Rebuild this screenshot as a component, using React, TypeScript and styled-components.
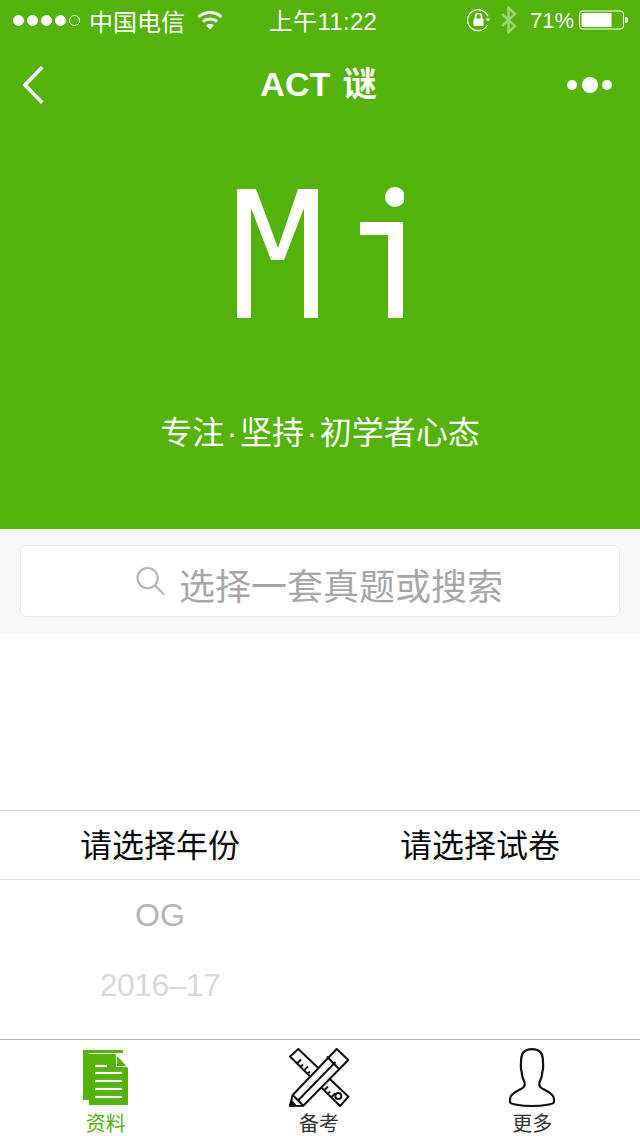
import React from "react";
import styled, { createGlobalStyle } from "styled-components";

const Global = createGlobalStyle`
  html, body { margin: 0; padding: 0; background: #fff; }
  * { box-sizing: border-box; }
`;

const FONT = `"Liberation Sans", "Noto Sans CJK SC", sans-serif`;
const GREEN = "#53b30a";

const Page = styled.div`
  width: 640px;
  height: 1136px;
  display: flex;
  flex-direction: column;
  overflow: hidden;
  font-family: ${FONT};
  background: #fff;
`;

const Hero = styled.header`
  height: 529px;
  flex: none;
  background: ${GREEN};
  color: #fff;
  display: flex;
  flex-direction: column;
`;

const StatusBar = styled.div`
  height: 40px;
  display: grid;
  grid-template-columns: 1fr auto 1fr;
  align-items: center;
  padding: 0 11px 0 13px;
  font-size: 24px;
`;

const StatusLeft = styled.div`
  display: flex;
  align-items: center;
`;

const SignalDots = styled.div`
  display: flex;
  gap: 3px;
  margin-right: 9px;
`;

const SignalDot = styled.span<{ $on: boolean }>`
  width: 11px;
  height: 11px;
  border-radius: 50%;
  border: 1px solid #fff;
  background: ${(p) => (p.$on ? "#fff" : "transparent")};
`;

const Carrier = styled.span`
  font-weight: 400;
  margin-right: 12px;
`;

const Clock = styled.span`
  margin-left: 4px;
  margin-top: -2px;
  font-weight: 400;
  letter-spacing: 0.3px;
`;

const StatusRight = styled.div`
  display: flex;
  align-items: center;
  justify-content: flex-end;
`;

const StatusGap = styled.span`
  width: 9px;
`;

const Percent = styled.span`
  margin: 2px 5px 0 12px;
  font-size: 22px;
`;

const NavBar = styled.nav`
  height: 90px;
  padding: 0 27px 0 22px;
  display: grid;
  grid-template-columns: 1fr auto 1fr;
  align-items: center;
`;

const NavSideRight = styled.div`
  display: flex;
  justify-content: flex-end;
`;

const NavSideLeft = styled.div`
  display: flex;
  justify-content: flex-start;
`;

const NavTitle = styled.h1`
  margin: 0 0 2px 2px;
  font-size: 34px;
  font-weight: 700;
  line-height: 1;
  word-spacing: 3px;
`;

const LogoWrap = styled.div`
  margin-top: 57px;
  display: flex;
  justify-content: center;
`;

const Slogan = styled.p`
  margin: 94px 0 0;
  text-align: center;
  font-size: 32px;
  line-height: 40px;
  font-weight: 400;
`;

const SloganDot = styled.span`
  padding: 0 2.5px;
`;

const SearchArea = styled.div`
  height: 105px;
  flex: none;
  background: #f6f7f9;
  padding: 16px 20px 17px;
`;

const SearchBox = styled.div`
  height: 72px;
  background: #fff;
  border: 1px solid #e8e8ec;
  border-radius: 7px;
  display: flex;
  align-items: center;
  justify-content: center;
  gap: 14px;
  color: #a6a6a6;
  font-size: 36px;
  font-weight: 400;
  padding-right: 1px;
`;

const SearchLabel = styled.span`
  margin-top: 5px;
`;

const Spacer = styled.div`
  flex: 1;
`;

const Picker = styled.section`
  flex: none;
  height: 229px;
  display: flex;
  flex-direction: column;
`;

const PickerHead = styled.div`
  height: 70px;
  padding-bottom: 4px;
  display: grid;
  grid-template-columns: 1fr 1fr;
  align-items: center;
  text-align: center;
  font-size: 32px;
  color: #0a0a0a;
  font-weight: 400;
  border-top: 1px solid #e4e4e4;
  border-bottom: 1px solid #e4e4e4;
`;

const PickerColumn = styled.div`
  width: 320px;
`;

const PickerOption = styled.div<{ $faded?: boolean }>`
  height: 70px;
  display: flex;
  align-items: center;
  justify-content: center;
  font-size: 32px;
  color: ${(p) => (p.$faded ? "#d8d8d8" : "#b4b4b4")};
  letter-spacing: ${(p) => (p.$faded ? "-0.6px" : "0")};
`;

const TabBar = styled.footer`
  flex: none;
  height: 97px;
  border-top: 1px solid #b4b4b4;
  display: grid;
  grid-template-columns: repeat(3, 1fr);
`;

const Tab = styled.div<{ $active?: boolean }>`
  display: flex;
  flex-direction: column;
  align-items: center;
  padding: 8px 2px 0 0;
  color: ${(p) => (p.$active ? GREEN : "#333")};
  font-size: 20px;
`;

const TabIconBox = styled.div`
  height: 61px;
  display: flex;
  align-items: flex-start;
  justify-content: center;
`;

const TabLabel = styled.span`
  line-height: 24px;
  margin-top: 3px;
  font-weight: 400;
`;

const Back = () => (
  <svg width="22" height="38" viewBox="0 0 22 38" fill="none" stroke="#fff" strokeWidth="3.6" strokeLinecap="square">
    <path d="M19 2.5 L3 19 L19 35.5" />
  </svg>
);

const More = () => (
  <svg width="46" height="18" viewBox="0 0 46 18" fill="#fff">
    <circle cx="5" cy="9" r="5" />
    <circle cx="23" cy="9" r="8" />
    <circle cx="40" cy="9" r="5" />
  </svg>
);

const Wifi = () => (
  <svg width="26" height="20" viewBox="0 0 26 20" fill="none" stroke="#fff" strokeWidth="3">
    <path d="M1.5 7 C8 1 18 1 24.5 7" />
    <path d="M6 11.5 C10 8 16 8 20 11.5" />
    <path d="M13 19.5 L9 15.2 C11 13.6 15 13.6 17 15.2 Z" fill="#fff" stroke="none" />
  </svg>
);

const RotationLock = () => (
  <svg width="24" height="24" viewBox="0 0 24 24" fill="none" stroke="#fff" strokeWidth="1.3">
    <path d="M20.8 8 A10.5 10.5 0 1 0 20.5 17" />
    <path d="M18.5 10.5 L23.5 10.5 L21 13.5 Z" fill="#fff" stroke="none" />
    <rect x="6.5" y="10.5" width="10" height="7.5" rx="1" fill="#fff" stroke="none" />
    <path d="M8.5 10.5 V8.5 A3 3 0 0 1 14.5 8.5 V10.5" strokeWidth="1.6" />
  </svg>
);

const Bluetooth = () => (
  <svg width="18" height="28" viewBox="0 0 18 28" fill="none" stroke="#fff" strokeOpacity="0.45" strokeWidth="2.4">
    <path d="M2 8 L15 20 L8.5 26 V2 L15 8 L2 20" />
  </svg>
);

const Battery = () => (
  <svg width="50" height="20" viewBox="0 0 50 20">
    <rect x="0.5" y="1" width="44" height="18" rx="3" fill="none" stroke="#fff" />
    <rect x="2.5" y="3" width="30" height="14" fill="#fff" />
    <path d="M46 7 H47 A2 2 0 0 1 49 9 V11 A2 2 0 0 1 47 13 H46 Z" fill="#fff" />
  </svg>
);

const Logo = () => (
  <svg width="168" height="132" viewBox="235 187 168 132" fill="#fff" role="img" aria-label="Mi">
    <polygon points="236,189 255,189 277,248 297,189 317,189 317,318 303,318 303,208 283,260 270,260 250,208 250,318 236,318" />
    <circle cx="394" cy="197" r="10" />
    <polygon points="359,222 402,222 402,318 387,318 387,235 359,235" />
  </svg>
);

const SearchIcon = () => (
  <svg width="29" height="30" viewBox="0 0 30 30" fill="none" stroke="#b4b4b4" strokeWidth="2.2">
    <circle cx="12" cy="12" r="10.5" />
    <path d="M19.5 19.5 L29 29" />
  </svg>
);

const DocIcon = () => (
  <svg width="48" height="60" viewBox="0 0 48 60">
    <path d="M1 2 H41 V5 H7 V52 H1 Z" fill={GREEN} />
    <path d="M7 6 H33 L46 20 V57 H7 Z" fill={GREEN} />
    <path d="M34 5 L47 19 H34 Z" fill="#fff" />
    <path d="M35 8 L44.5 18 H35 Z" fill={GREEN} />
    <g stroke="#fff" strokeWidth="2.2" fill="none">
      <path d="M13 18 H25" />
      <path d="M13 25 H40" />
      <path d="M13 33 H40" />
      <path d="M13 41 H40" />
      <path d="M13 49 H40" />
    </g>
  </svg>
);

const ToolsIcon = () => (
  <svg width="62" height="60" viewBox="0 0 62 60" fill="none" stroke="#111" strokeWidth="2" strokeLinejoin="round">
    <path d="M2 8.5 L10.3 1 L60.5 48.7 L52 58 Z" />
    <path d="M9 15.5 L13 11.5 M12.5 19 L15 16.5 M16 22.5 L20 18.5 M19.5 26 L22 23.5 M36 42.5 L40 38.5 M39.5 46 L42 43.5 M43 49.5 L47 45.5" />
    <circle cx="50.3" cy="48" r="3" />
    <path d="M2 58 L4.7 47 L48.7 1 L60.3 12 L15.3 57.7 Z" fill="#fff" />
    <path d="M39 8.5 L51.5 21.5" />
    <path d="M10 52.5 L47.5 14" />
    <path d="M4.7 47 L15.3 57.7" />
    <path d="M2 58 L3.2 53 L7 56.8 Z" fill="#111" />
  </svg>
);

const PersonIcon = () => (
  <svg width="48" height="60" viewBox="0 0 48 60" fill="none" stroke="#111" strokeWidth="2.2" strokeLinejoin="round">
    <path d="M24 1.2 C30 1.2 34.5 3.5 34.8 11 C35 16 35.8 20 34.5 23 C34.3 29 33 31 31.5 34 C30.5 38 32 39.5 37 42 C42 44.5 46 47 46 51 V54 C46 56 36 58 24 58 C12 58 2 56 2 54 V51 C2 47 6 44.5 11 42 C16 39.5 17.5 38 16.5 34 C15 31 13.7 29 13.5 23 C12.2 20 13 16 13.2 11 C13.5 3.5 18 1.2 24 1.2 Z" />
  </svg>
);

export default function App() {
  return (
    <Page>
      <Global />
      <Hero>
        <StatusBar>
          <StatusLeft>
            <SignalDots>
              {[true, true, true, true, false].map((on, i) => (
                <SignalDot key={i} $on={on} />
              ))}
            </SignalDots>
            <Carrier>中国电信</Carrier>
            <Wifi />
          </StatusLeft>
          <Clock>上午11:22</Clock>
          <StatusRight>
            <RotationLock />
            <StatusGap />
            <Bluetooth />
            <Percent>71%</Percent>
            <Battery />
          </StatusRight>
        </StatusBar>
        <NavBar>
          <NavSideLeft><Back /></NavSideLeft>
          <NavTitle>ACT 谜</NavTitle>
          <NavSideRight><More /></NavSideRight>
        </NavBar>
        <LogoWrap>
          <Logo />
        </LogoWrap>
        <Slogan>
          专注<SloganDot>·</SloganDot>坚持<SloganDot>·</SloganDot>初学者心态
        </Slogan>
      </Hero>
      <SearchArea>
        <SearchBox>
          <SearchIcon />
          <SearchLabel>选择一套真题或搜索</SearchLabel>
        </SearchBox>
      </SearchArea>
      <Spacer />
      <Picker>
        <PickerHead>
          <span>请选择年份</span>
          <span>请选择试卷</span>
        </PickerHead>
        <PickerColumn>
          <PickerOption>OG</PickerOption>
          <PickerOption $faded>2016–17</PickerOption>
        </PickerColumn>
      </Picker>
      <TabBar>
        <Tab $active>
          <TabIconBox><DocIcon /></TabIconBox>
          <TabLabel>资料</TabLabel>
        </Tab>
        <Tab>
          <TabIconBox><ToolsIcon /></TabIconBox>
          <TabLabel>备考</TabLabel>
        </Tab>
        <Tab>
          <TabIconBox><PersonIcon /></TabIconBox>
          <TabLabel>更多</TabLabel>
        </Tab>
      </TabBar>
    </Page>
  );
}
